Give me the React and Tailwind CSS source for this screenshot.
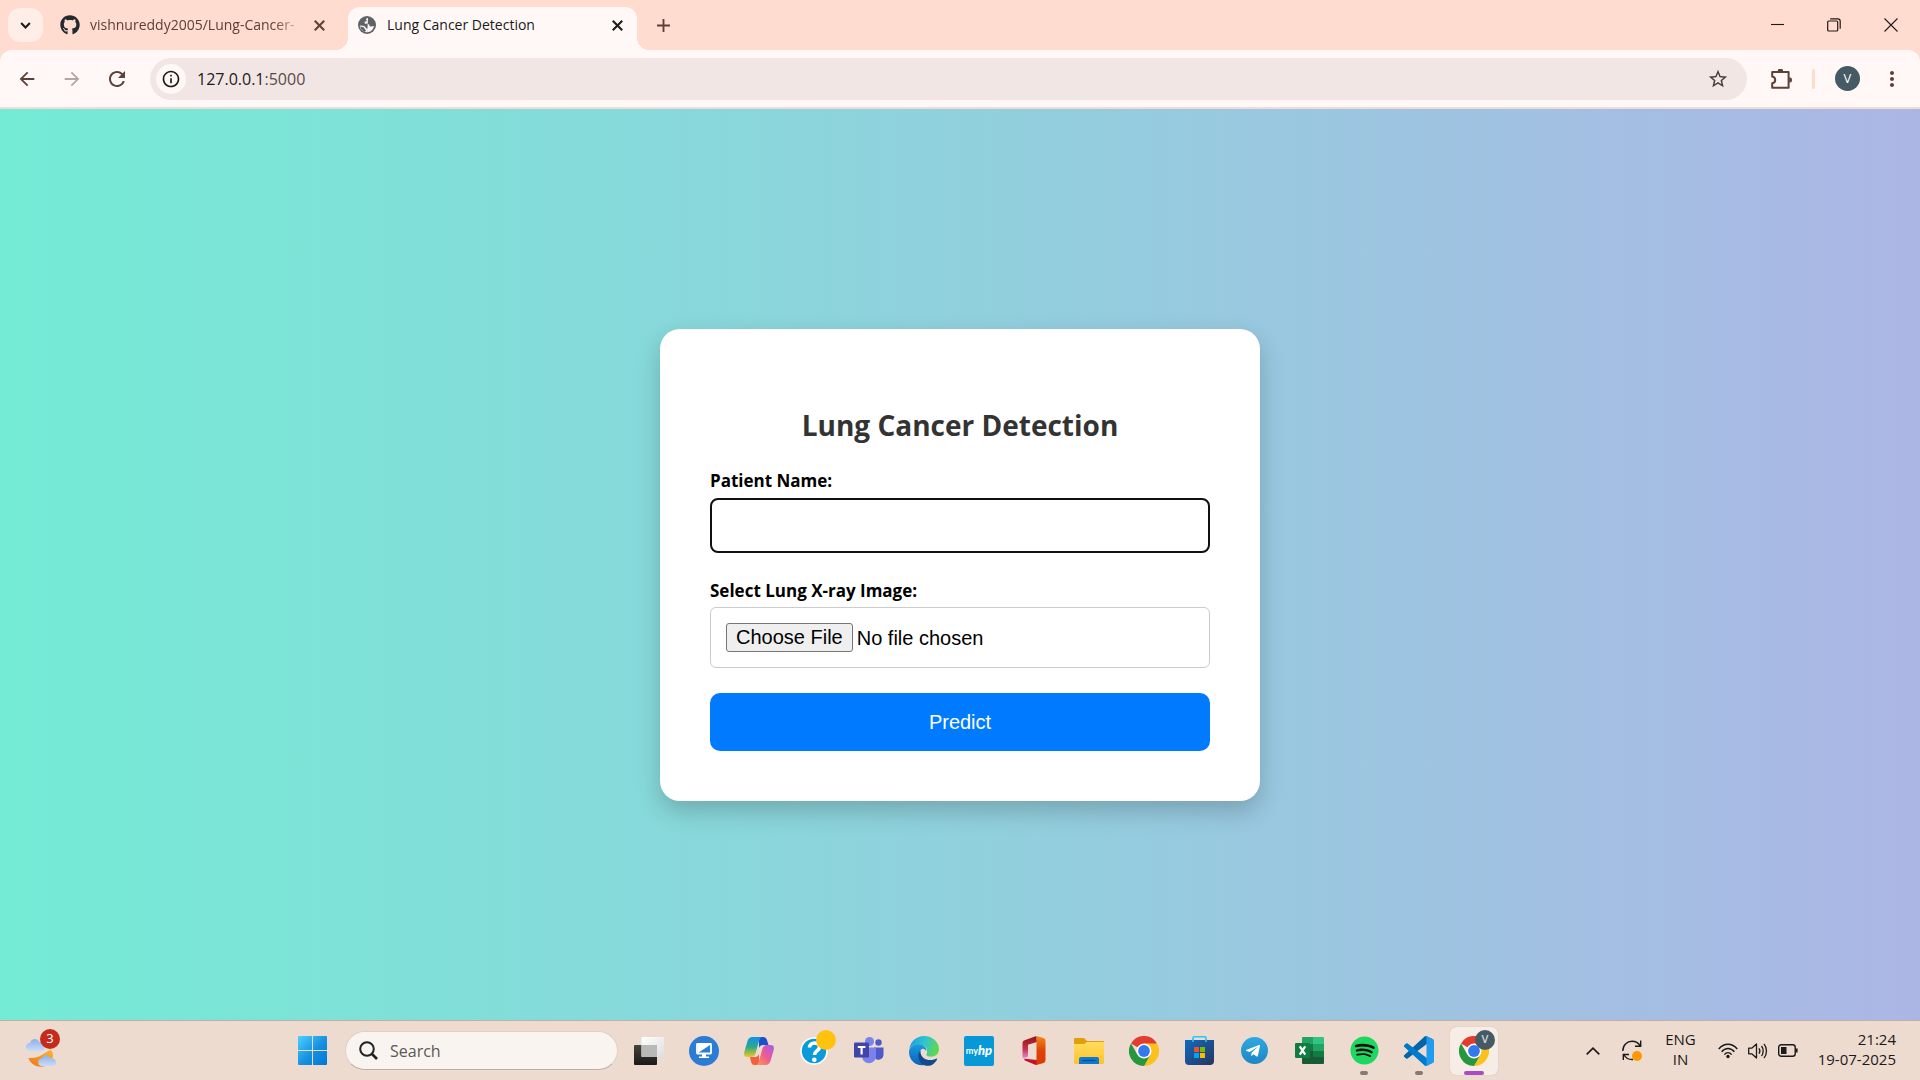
import React from "react";
import { FaGithub, FaSpotify, FaTelegramPlane } from "react-icons/fa";
import {
  MdArrowBack,
  MdArrowForward,
  MdRefresh,
  MdInfoOutline,
  MdStarBorder,
  MdMoreVert,
} from "react-icons/md";

const ui = "font-['Open_Sans','Noto_Sans',sans-serif]";

/* ---------- browser window ---------- */

function Cross({ className }) {
  return (
    <svg viewBox="0 0 10 10" className={className} fill="none" stroke="currentColor" strokeWidth="1.9">
      <path d="M0.7 0.7 9.3 9.3M9.3 0.7 0.7 9.3" />
    </svg>
  );
}

function GlobeIcon() {
  return (
    <svg viewBox="0 0 18 18" className="size-[18px]">
      <circle cx="9" cy="9" r="9" fill="#5f6368" />
      <path
        d="M10 2c-2 .2-2.300 1.500-1.500 2.300.6.8-.3 1.200-1.200 1.300-1 .1-.8 1.400-.3 2 .8.900 3 .2 4 .9.900.700.200 1.800 1.300 2 1.300.2 2-.5 3.700-.6C15.300 13.500 12.500 16 9.300 16.200c-.6-1 .5-1.900.3-2.800-.2-1-1.700-1-2.100-1.900-.4-.9-1.500-1.500-2.700-1.700L1.900 9.500C1.700 10.500 2 11.800 2.600 12.700 3.800 14.800 6.500 16.300 9.300 16.200"
        fill="#fff8f6"
      />
      <path d="M2.200 10.500c1.500.2 3.800.4 4.200 1.700.3 1 1.500 1.300 1.400 2.200-.1.700-.8 1.100-1 1.700C4.500 15.400 2.600 13.300 2.200 10.500z" fill="#5f6368" />
    </svg>
  );
}

function TabStrip() {
  return (
    <header className="flex h-[50px] items-center bg-[#ffdbd0] pl-2">
      <button aria-label="Search tabs" className="flex h-[34px] w-[35px] items-center justify-center rounded-xl bg-[#ffede7]">
        <svg viewBox="0 0 12 8" className="h-[7px] w-[11px]" fill="none" stroke="#201a18" strokeWidth="2.4">
          <path d="M1 1.2 6 6.2 11 1.2" />
        </svg>
      </button>
      <div className="flex h-full w-[305px] items-center pl-[17px]">
        <FaGithub className="size-5 shrink-0 text-[#24292f]" />
        <span className="ml-[10px] w-[214px] text-sm whitespace-nowrap text-[#5d4037] [mask-image:linear-gradient(to_right,black_86%,transparent)]">
          vishnureddy2005/Lung-Cancer-
        </span>
        <button aria-label="Close vishnureddy2005 tab" className="ml-[10px] text-[#5d4037]">
          <Cross className="size-[11px]" />
        </button>
      </div>
      <div className="relative flex h-[43px] w-[289px] items-center self-end rounded-t-xl bg-[#fff8f6] pb-[7px] pl-[10px] before:absolute before:bottom-0 before:-left-3 before:size-3 before:bg-[radial-gradient(circle_at_0_0,transparent_12px,#fff8f6_12px)] after:absolute after:-right-3 after:bottom-0 after:size-3 after:bg-[radial-gradient(circle_at_100%_0,transparent_12px,#fff8f6_12px)]">
        <GlobeIcon />
        <span className="ml-[11px] text-sm text-[#201a18]">Lung Cancer Detection</span>
        <button aria-label="Close Lung Cancer Detection tab" className="mr-[14px] ml-auto text-[#201a18]">
          <Cross className="size-[11px]" />
        </button>
      </div>
      <button aria-label="New tab" className="ml-5 text-[#5d4037]">
        <svg viewBox="0 0 14 14" className="size-[13px]" fill="none" stroke="currentColor" strokeWidth="2">
          <path d="M7 0v14M0 7h14" />
        </svg>
      </button>
      <div className="mr-[22px] ml-auto flex items-center gap-[43px] text-[#201a18]">
        <button aria-label="Minimize">
          <svg viewBox="0 0 13 13" className="size-[13px]" stroke="currentColor" strokeWidth="1.1">
            <path d="M0 5.5h13" />
          </svg>
        </button>
        <button aria-label="Restore">
          <svg viewBox="0 0 14 14" className="size-[14px]" fill="none" stroke="currentColor" strokeWidth="1.2">
            <rect x="0.7" y="3" width="10" height="10" rx="1" />
            <path d="M3.2 0.8h7.6a2.4 2.4 0 0 1 2.4 2.4v7.6" />
          </svg>
        </button>
        <button aria-label="Close window">
          <svg viewBox="0 0 14 14" className="size-[14px]" stroke="currentColor" strokeWidth="1.1">
            <path d="M0.5 0.5 13.5 13.5M13.5 0.5 0.5 13.5" />
          </svg>
        </button>
      </div>
    </header>
  );
}

function Toolbar() {
  return (
    <div className="bg-[#ffdbd0]">
      <nav className="flex h-[59px] items-center rounded-t-xl border-b-2 border-[#f0dcd6] bg-[#fff8f6] pl-4 text-[#5d4037]">
        <button aria-label="Back">
          <MdArrowBack className="size-[22px]" />
        </button>
        <button aria-label="Forward" className="ml-[23px] text-[#b5a6a2]">
          <MdArrowForward className="size-[22px]" />
        </button>
        <button aria-label="Reload" className="ml-[22px]">
          <MdRefresh className="size-6" />
        </button>
        <div className="ml-[21px] flex h-[42px] flex-1 items-center rounded-full bg-[#f2e6e5] pl-[6px]">
          <button aria-label="Site information" className="flex size-[30px] items-center justify-center rounded-full bg-[#fff8f6] text-[#201a18]">
            <MdInfoOutline className="size-5" />
          </button>
          <div className="ml-[11px] flex-1 text-base text-[#201a18]">
            127.0.0.1<span className="text-[#5a4a46]">:5000</span>
          </div>
          <button aria-label="Bookmark this page" className="mr-[18px] text-[#4a3b37]">
            <MdStarBorder className="size-[22px]" />
          </button>
        </div>
        <button aria-label="Extensions" className="ml-6">
          <svg viewBox="0 0 21 20" className="h-5 w-[21px]" fill="none" stroke="currentColor" strokeWidth="2" strokeLinejoin="round">
            <path d="M1.2 2.9h16.4v15.9H1.2v-4.6c1.9-.3 3-1.500 3-3.300S3.100 7.900 1.200 7.600z" />
            <path d="M6.700 2.200a2.700 2.700 0 0 1 5.400 0zM18.300 8.200a2.700 2.700 0 0 1 0 5.400z" fill="currentColor" stroke="none" />
          </svg>
        </button>
        <div className="ml-[20px] h-5 w-[3px] rounded bg-[#ffdbd0]" />
        <button aria-label="Profile" className="ml-5 flex size-[25px] items-center justify-center rounded-full bg-[#455a64] text-[13px] text-white">
          V
        </button>
        <button aria-label="Menu" className="mr-4 ml-[20px]">
          <MdMoreVert className="size-6" />
        </button>
      </nav>
    </div>
  );
}

/* ---------- page ---------- */

function DetectionForm() {
  return (
    <form
      onSubmit={(e) => e.preventDefault()}
      className="flex w-full max-w-[600px] flex-col rounded-[20px] bg-white px-[50px] pt-[76px] pb-[50px] shadow-[0_10px_25px_rgba(0,0,0,0.2)]"
    >
      <h1 className="mb-6 text-center text-[28px] leading-10 font-bold text-[#333]">Lung Cancer Detection</h1>
      <label htmlFor="patient" className="mb-[5px] text-[17px] leading-6 font-bold text-black">
        Patient Name:
      </label>
      <input
        id="patient"
        type="text"
        className="mb-[26px] h-[55px] rounded-lg border-2 border-[#101010] px-[14px] font-['Liberation_Sans',sans-serif] text-xl outline-none"
      />
      <label htmlFor="xray" className="mb-1 text-[17px] leading-6 font-bold text-black">
        Select Lung X-ray Image:
      </label>
      <input
        id="xray"
        type="file"
        className="mb-[25px] rounded-md border border-[#ccc] p-[15px] font-['Liberation_Sans',sans-serif] text-xl leading-6 text-black file:h-[29px] file:rounded-[3px] file:border file:border-[#767676] file:bg-[#efefef] file:px-[9px] file:leading-6 file:text-black"
      />
      <button
        type="submit"
        className="h-[58px] rounded-[10px] bg-[#007bff] font-['Liberation_Sans',sans-serif] text-xl text-white"
      >
        Predict
      </button>
    </form>
  );
}

/* ---------- taskbar icons ---------- */

function WeatherIcon() {
  return (
    <svg viewBox="0 0 34 36" className="h-9 w-[34px]">
      <defs>
        <linearGradient id="cloud" x1="0" y1="0" x2="0" y2="1">
          <stop offset="0" stopColor="#8fb0ea" />
          <stop offset="1" stopColor="#c9dcf8" />
        </linearGradient>
        <linearGradient id="moon" x1="0" y1="1" x2="1" y2="0">
          <stop offset="0" stopColor="#ee7320" />
          <stop offset="1" stopColor="#fbb72c" />
        </linearGradient>
      </defs>
      <path d="M2.500 25C6 36 24 38 27 23c0-3-.5-5-2-6-6 1-10 9-22.500 8z" fill="url(#moon)" />
      <path d="M4 18a4 4 0 0 1 0-8c1-5 8-5 9-1 4 0 6 2 6 5s-2 4-4 4z" fill="url(#cloud)" />
      <path d="M16 33a3.500 3.500 0 0 1 0-7.500c1-4.500 7-4.500 8-.5 4 0 6 1.500 6 4.500s-2 3.500-4 3.500z" fill="url(#cloud)" />
    </svg>
  );
}

function WindowsIcon() {
  return (
    <svg viewBox="0 0 29 29" className="size-[29px]">
      <defs>
        <linearGradient id="win" x1="0" y1="0" x2="1" y2="1" gradientUnits="objectBoundingBox">
          <stop offset="0" stopColor="#4cd0ff" />
          <stop offset="0.55" stopColor="#158fe0" />
          <stop offset="1" stopColor="#0078d4" />
        </linearGradient>
      </defs>
      <path fill="url(#win)" d="M0 1q0-1 1-1h13v14H0zM15 0h13q1 0 1 1v13H15zM0 15h14v14H1q-1 0-1-1zM15 15h14v13q0 1-1 1H15z" />
    </svg>
  );
}

function TaskViewIcon() {
  return (
    <svg viewBox="0 0 30 28" className="h-7 w-[30px]">
      <defs>
        <linearGradient id="tvd" x1="0" y1="0" x2="0" y2="1">
          <stop offset="0" stopColor="#45433f" />
          <stop offset="1" stopColor="#1b1a18" />
        </linearGradient>
        <linearGradient id="tvl" x1="0" y1="0" x2="1" y2="1">
          <stop offset="0" stopColor="#ffffff" />
          <stop offset="1" stopColor="#dedede" />
        </linearGradient>
      </defs>
      <rect y="8" width="23" height="20" rx="1" fill="url(#tvd)" />
      <rect x="7.500" y="0" width="22.500" height="20" rx="1" fill="url(#tvl)" />
      <path d="M7.500 8H23v12H7.500z" fill="#b9b9b8" />
    </svg>
  );
}

function RemoteIcon() {
  return (
    <svg viewBox="0 0 30 30" className="size-[30px]">
      <circle cx="15" cy="15" r="15" fill="#2b7cd3" />
      <rect x="8" y="8" width="14" height="9.500" rx="0.500" fill="#2b7cd3" stroke="#fff" strokeWidth="1.800" />
      <path d="M9 9h12L9 17z" fill="#fff" />
      <path d="M13 18h4v2.500h3V22H10v-1.500h3z" fill="#fff" />
    </svg>
  );
}

function CopilotIcon() {
  return (
    <svg viewBox="0 0 30 28" className="h-7 w-[30px]">
      <defs>
        <linearGradient id="cpA" x1="0" y1="0" x2="0" y2="1">
          <stop offset="0" stopColor="#1390ee" />
          <stop offset="0.5" stopColor="#2aa98a" />
          <stop offset="1" stopColor="#f2c81c" />
        </linearGradient>
        <linearGradient id="cpB" x1="1" y1="0" x2="0" y2="1">
          <stop offset="0" stopColor="#a45bf0" />
          <stop offset="0.5" stopColor="#ee5a94" />
          <stop offset="1" stopColor="#f9a04a" />
        </linearGradient>
      </defs>
      <path d="M15 0h4.500q2.500 0 3.300 2.500L24.500 8H19q-3 0-4 3z" fill="#1b4fd0" />
      <path d="M15 28h-4.500q-2.500 0-3.300-2.500L6 20h5q3 0 4-3z" fill="#f2603e" />
      <path d="M8.500 0H18q-2 .5-3 4l-3.500 12.500Q10.500 20 7 20H3.500Q-.8 20 .3 15L3.500 4Q4.800 0 8.500 0z" fill="url(#cpA)" />
      <path d="M21.500 28H12q2-.5 3-4l3.500-12.500Q19.500 8 23 8h3.500q4.300 0 3.200 5L26.500 24q-1.300 4-5 4z" fill="url(#cpB)" />
    </svg>
  );
}

function HelpIcon() {
  return (
    <span className="relative block size-7">
      <svg viewBox="0 0 28 28" className="size-7">
        <circle cx="14" cy="14" r="13" fill="#0b9bdb" stroke="#fff" strokeWidth="1.600" />
        <path d="M9.500 10.500c0-6 10-6 10-.5 0 3.800-5 3.600-5 8" fill="none" stroke="#fff" strokeWidth="3.600" />
        <circle cx="14.300" cy="22.700" r="2.300" fill="#fff" />
      </svg>
      <span className="absolute -top-[7px] -right-2 size-5 rounded-full bg-[#ffc20e]" />
    </span>
  );
}

function TeamsIcon() {
  return (
    <svg viewBox="0 0 30 27" className="h-[27px] w-[30px]">
      <circle cx="24.500" cy="5.500" r="3.200" fill="#5059c9" />
      <circle cx="15.500" cy="4.500" r="4.500" fill="#7b83eb" />
      <path d="M20 10.500h9.500V17c0 6-6 6.500-8 5z" fill="#5059c9" />
      <path d="M8 10.500h14V19c0 9.500-14 9.500-14 0z" fill="#7b83eb" />
      <rect y="5.500" width="15" height="15" rx="1.200" fill="#4046a8" />
      <path d="M3.800 9h7.600v2H8.700v6.500H6.500V11H3.800z" fill="#fff" />
    </svg>
  );
}

function EdgeIcon() {
  return (
    <svg viewBox="0 0 30 30" className="size-[30px]">
      <defs>
        <linearGradient id="edA" x1="0" y1="0.200" x2="1" y2="0.500">
          <stop offset="0" stopColor="#1a9be4" />
          <stop offset="0.500" stopColor="#31c5cf" />
          <stop offset="1" stopColor="#5fd94a" />
        </linearGradient>
        <linearGradient id="edB" x1="0" y1="0" x2="0" y2="1">
          <stop offset="0" stopColor="#1b9ae0" />
          <stop offset="1" stopColor="#0c62b8" />
        </linearGradient>
      </defs>
      <path d="M.3 13C1.500 5 8 0 15 0c9 0 15 6.500 15 13 0 5-3.800 7.700-8 7.700-3.500 0-5-1.300-4.500-2.300C19.500 14 16.500 9 11 8.500 6 8 2 10 .3 13z" fill="url(#edA)" />
      <path d="M.2 14C2 10 6 8 10 8.300c5 .3 7.800 4 7.200 7-.9-1.900-2.500-2.800-4-2.300-2.700 1-3 5-1.200 8.500 1.500 3 4 5 7 6C10 33-1.500 25 .2 14z" fill="url(#edB)" />
      <path d="M11.500 14.500C8.500 17.500 8.500 23 12 27c3 3.500 9 3.500 12 1.200 2-1.500 3.300-3.200 4-4.700.3-.8-.3-1.200-1-.8C21.500 25.500 11 24 11.500 14.500z" fill="#124a8f" />
    </svg>
  );
}

function MyHpIcon() {
  return (
    <span className="flex size-[30px] items-center justify-center rounded-[2px] bg-[#0798d8] font-['Lato',sans-serif] text-[9px] leading-none font-bold text-white">
      my<b className="text-[13px] leading-none italic">hp</b>
    </span>
  );
}

function OfficeIcon() {
  return (
    <svg viewBox="0 0 24 29" className="h-[29px] w-6">
      <defs>
        <linearGradient id="ofL" x1="0" y1="0" x2="0" y2="1">
          <stop offset="0" stopColor="#8d1515" />
          <stop offset="0.600" stopColor="#c93250" />
          <stop offset="1" stopColor="#e48ae0" />
        </linearGradient>
        <linearGradient id="ofR" x1="0" y1="0" x2="0" y2="1">
          <stop offset="0" stopColor="#f68a1c" />
          <stop offset="0.500" stopColor="#dd4308" />
          <stop offset="1" stopColor="#d83b01" />
        </linearGradient>
      </defs>
      <path d="M14.500 0 2.500 4.300Q.5 5 .5 7v14q0 1.500 2 1.200l3.500-1.700V8.800L15 6z" fill="url(#ofL)" />
      <path d="M3 22.800 15 24v4.800q-1 .4-2.500-.2L3 24.500q-1.500-1 0-1.700z" fill="#c8102e" />
      <path d="M14.500 0 21.500 2Q23.500 2.600 23.500 5v19q0 2.300-2 3l-7 2z" fill="url(#ofR)" />
    </svg>
  );
}

function ExplorerIcon() {
  return (
    <svg viewBox="0 0 30 26" className="h-[26px] w-[30px]">
      <defs>
        <linearGradient id="fold" x1="0" y1="0" x2="0" y2="1">
          <stop offset="0" stopColor="#ffdc5c" />
          <stop offset="1" stopColor="#fcc42c" />
        </linearGradient>
      </defs>
      <path d="M0 1q0-1 1-1h9l3 3h16q1 0 1 1v6H0z" fill="#dfa00c" />
      <path d="M0 6h10l3-2h16q1 0 1 1v20q0 1-1 1H1q-1 0-1-1z" fill="url(#fold)" />
      <path d="M5 26v-5q0-2 2-2h16q2 0 2 2v5z" fill="#1179cc" />
      <path d="M8.500 22.500h13" stroke="#0a4d8c" strokeWidth="1.200" />
    </svg>
  );
}

function ChromeIcon() {
  return (
    <svg viewBox="0 0 30 30" className="size-[30px]">
      <path d="M15 15 2 7.500A15 15 0 0 1 28 7.500z" fill="#e33b2e" />
      <path d="M15 7.500h13A15 15 0 0 1 15 30l6.500-11.200z" fill="#fcc21b" />
      <path d="M2 7.500A15 15 0 0 0 15 30l6.500-11.200L15 15l-6.500 3.800z" fill="#26963f" />
      <circle cx="15" cy="15" r="7.500" fill="#fff" />
      <circle cx="15" cy="15" r="5.900" fill="#3478ef" />
    </svg>
  );
}

function StoreIcon() {
  return (
    <svg viewBox="0 0 29 29" className="size-[29px]">
      <defs>
        <linearGradient id="store" x1="0" y1="0" x2="1" y2="1">
          <stop offset="0" stopColor="#0f6cc0" />
          <stop offset="1" stopColor="#28345f" />
        </linearGradient>
      </defs>
      <path d="M8 6V2q0-1.200 1.200-1.200h10.600Q21 .8 21 2v4" fill="none" stroke="#2cc4f2" strokeWidth="1.600" />
      <path d="M0 4h29v21q0 4-4 4H4q-4 0-4-4z" fill="url(#store)" />
      <path d="M8 3.500V6M21 3.500V6" stroke="#2cc4f2" strokeWidth="1.600" />
      <path d="M9 11h5v5H9z" fill="#f25022" />
      <path d="M15 11h5v5h-5z" fill="#7fba00" />
      <path d="M9 17h5v5H9z" fill="#00a4ef" />
      <path d="M15 17h5v5h-5z" fill="#ffb900" />
    </svg>
  );
}

function TelegramIcon() {
  return (
    <span className="flex size-[27px] items-center justify-center rounded-full bg-linear-to-b from-[#2fa9e2] to-[#1e86c4]">
      <FaTelegramPlane className="mr-[2px] size-4 text-white" />
    </span>
  );
}

function ExcelIcon() {
  return (
    <svg viewBox="0 0 29 27" className="h-[27px] w-[29px]">
      <path d="M7 1q0-1 1-1h10v7H7z" fill="#21a366" />
      <path d="M18 0h10q1 0 1 1v6H18z" fill="#33c481" />
      <path d="M7 7h11v7H7z" fill="#107c41" />
      <path d="M18 7h11v7H18z" fill="#21a366" />
      <path d="M7 14h11v6H7z" fill="#185c37" />
      <path d="M18 14h11v6.500H18z" fill="#107c41" />
      <path d="M7 20h22v6q0 1-1 1H8q-1 0-1-1z" fill="#185c37" />
      <rect y="6" width="15" height="15" rx="1.200" fill="#107c41" />
      <path d="M4.800 9.300 10.200 17.700M10.200 9.300 4.800 17.700" stroke="#fff" strokeWidth="2.200" />
    </svg>
  );
}

function SpotifyIcon() {
  return (
    <span className="flex size-[29px] items-center justify-center rounded-full bg-[radial-gradient(circle,#111_12px,transparent_13px)]">
      <FaSpotify className="size-[29px] text-[#1ed760]" />
    </span>
  );
}

function CodeIcon() {
  return (
    <svg viewBox="0 0 100 100" className="size-[30px]">
      <path
        d="M96.46 10.8 75.86.88C73.47-.27 70.62.21 68.75 2.08L1.3 63.58c-1.81 1.65-1.81 4.51 0 6.16l5.51 5.01c1.49 1.35 3.72 1.45 5.32.23L93.36 13.37c2.73-2.07 6.64-.12 6.64 3.3v-.24c0-2.4-1.37-4.6-3.54-5.63z"
        fill="#0065a9"
      />
      <path
        d="M96.46 89.2l-20.6 9.92c-2.39 1.15-5.24.67-7.11-1.2L1.3 36.42c-1.81-1.65-1.81-4.51 0-6.16l5.51-5.01c1.49-1.35 3.72-1.45 5.32-.23L93.36 86.63c2.73 2.07 6.64.12 6.64-3.3v.24c0 2.4-1.37 4.6-3.54 5.63z"
        fill="#007acc"
      />
      <path
        d="M75.86 99.13c-2.39 1.15-5.24.66-7.11-1.21 2.31 2.31 6.25.67 6.25-2.59V4.67c0-3.26-3.94-4.89-6.25-2.59 1.87-1.87 4.72-2.36 7.11-1.21l20.6 9.91C98.62 11.82 100 14 100 16.41v67.17c0 2.4-1.38 4.59-3.54 5.63l-20.6 9.92z"
        fill="#1f9cf0"
      />
    </svg>
  );
}

function ProfileChromeIcon() {
  return (
    <span className="relative block size-[30px]">
      <ChromeIcon />
      <span className="absolute -top-[6px] -right-[6px] flex size-5 items-center justify-center rounded-full bg-[#455a64] text-[11px] font-semibold text-[#cfd8dc]">
        V
      </span>
    </span>
  );
}

const APPS = [
  { name: "Task View", Icon: TaskViewIcon },
  { name: "Remote Desktop", Icon: RemoteIcon },
  { name: "Copilot", Icon: CopilotIcon },
  { name: "Support Assistant", Icon: HelpIcon },
  { name: "Teams", Icon: TeamsIcon },
  { name: "Edge", Icon: EdgeIcon },
  { name: "myHP", Icon: MyHpIcon },
  { name: "Office", Icon: OfficeIcon },
  { name: "File Explorer", Icon: ExplorerIcon },
  { name: "Chrome", Icon: ChromeIcon },
  { name: "Microsoft Store", Icon: StoreIcon },
  { name: "Telegram", Icon: TelegramIcon },
  { name: "Excel", Icon: ExcelIcon },
  { name: "Spotify", Icon: SpotifyIcon, running: true },
  { name: "Visual Studio Code", Icon: CodeIcon, running: true },
  { name: "Chrome, V", Icon: ProfileChromeIcon, active: true },
];

function AppButton({ name, Icon, running, active }) {
  return (
    <button
      aria-label={name}
      className={
        active
          ? "relative flex size-12 items-center justify-center rounded-md bg-[#f7ede7] shadow-[0_0_1px_rgba(0,0,0,0.25)]"
          : "relative flex size-12 items-center justify-center"
      }
    >
      <Icon />
      {running && <span className="absolute bottom-0 left-5 h-1 w-2 rounded-full bg-[#857a74]" />}
      {active && <span className="absolute bottom-0 left-[14px] h-1 w-5 rounded-full bg-[#a94bc2]" />}
    </button>
  );
}

function Tray() {
  return (
    <div className="mr-6 ml-auto flex items-center text-[#1a1a1a]">
      <button aria-label="Show hidden icons">
        <svg viewBox="0 0 14 8" className="h-2 w-[14px]" fill="none" stroke="currentColor" strokeWidth="1.700">
          <path d="M0.700 7.300 7 1.200 13.300 7.300" />
        </svg>
      </button>
      <button aria-label="Updates" className="relative ml-[22px]">
        <svg viewBox="0 0 20 21" className="h-[21px] w-5" fill="none" stroke="currentColor" strokeWidth="1.400">
          <path d="M0.800 11C0.800 5 5 1.300 10 1.300c3.500 0 6.500 1.700 8.300 4.700M18.700 0.500V6.300H13" />
          <path d="M1.300 20v-5.500H7M2 15c2 3.300 5 4.800 9 4.500" />
        </svg>
        <span className="absolute right-0 bottom-0 size-[10px] rounded-full bg-[#ff9800]" />
      </button>
      <button className="ml-[23px] pb-1 text-center text-[15px] leading-5">
        ENG
        <br />
        IN
      </button>
      <button aria-label="Network, sound and battery" className="ml-[22px] flex items-center gap-[10px]">
        <svg viewBox="0 0 20 16" className="h-4 w-5" fill="none" stroke="currentColor" strokeWidth="1.400">
          <path d="M0.700 6C6-.4 14-.4 19.300 6M3.600 8.800c3.800-4.500 9-4.500 12.800 0M6.300 11.600c2.200-2.600 5.200-2.600 7.400 0" />
          <circle cx="10" cy="13.500" r="1.700" fill="currentColor" stroke="none" />
        </svg>
        <svg viewBox="0 0 20 18" className="h-[18px] w-5" fill="none" stroke="currentColor" strokeWidth="1.300" strokeLinejoin="round">
          <path d="M0.700 6.200h3L8.500 2v14L3.700 11.800h-3z" />
          <path d="M11 6.300c1 1.500 1 3.900 0 5.400M13.500 4c2.200 2.700 2.200 7.300 0 10M16 1.800c3.300 4 3.300 10.400 0 14.400" />
        </svg>
        <svg viewBox="0 0 20 13" className="h-[13px] w-5" fill="none" stroke="currentColor" strokeWidth="1.400">
          <rect x="0.700" y="0.700" width="16.500" height="11.600" rx="2.500" />
          <rect x="3" y="3" width="5.500" height="7" fill="currentColor" stroke="none" />
          <path d="M18.500 4.500v4" strokeWidth="2.200" />
        </svg>
      </button>
      <button className="ml-5 pb-1 text-right text-[15px] leading-5">
        21:24
        <br />
        19-07-2025
      </button>
    </div>
  );
}

function Taskbar() {
  return (
    <footer className="flex h-[60px] items-center border-t border-[#c3aea5] bg-[#eedbd0]">
      <button aria-label="Weather" className="relative ml-[26px]">
        <WeatherIcon />
        <span className="absolute -top-1 right-0 flex size-5 items-center justify-center rounded-full bg-[#c42b1c] text-[13px] text-white">
          3
        </span>
      </button>
      <button aria-label="Start" className="ml-[238px]">
        <WindowsIcon />
      </button>
      <label className="ml-[18px] flex h-[39px] w-[273px] items-center rounded-full border border-[#e0cfc6] border-b-[#bfaea7] bg-[#faf4f1] pl-[13px]">
        <svg viewBox="0 0 19 19" className="size-[19px] shrink-0" fill="none" stroke="#222" strokeWidth="2">
          <circle cx="8" cy="8" r="6.800" />
          <path d="M13 13l5 5" strokeWidth="2.600" />
        </svg>
        <input
          type="text"
          placeholder="Search"
          aria-label="Search"
          className="ml-3 w-full bg-transparent text-base outline-none placeholder:text-[#5c5856]"
        />
      </label>
      <div className="ml-[7px] flex gap-[7px]">
        {APPS.map((app) => (
          <AppButton key={app.name} {...app} />
        ))}
      </div>
      <Tray />
    </footer>
  );
}

export default function App() {
  return (
    <div className={`flex min-h-screen flex-col ${ui}`}>
      <TabStrip />
      <Toolbar />
      <main className="flex flex-1 items-center justify-center bg-[linear-gradient(to_right,#74ebd5,#acb6e5)]">
        <DetectionForm />
      </main>
      <Taskbar />
    </div>
  );
}
